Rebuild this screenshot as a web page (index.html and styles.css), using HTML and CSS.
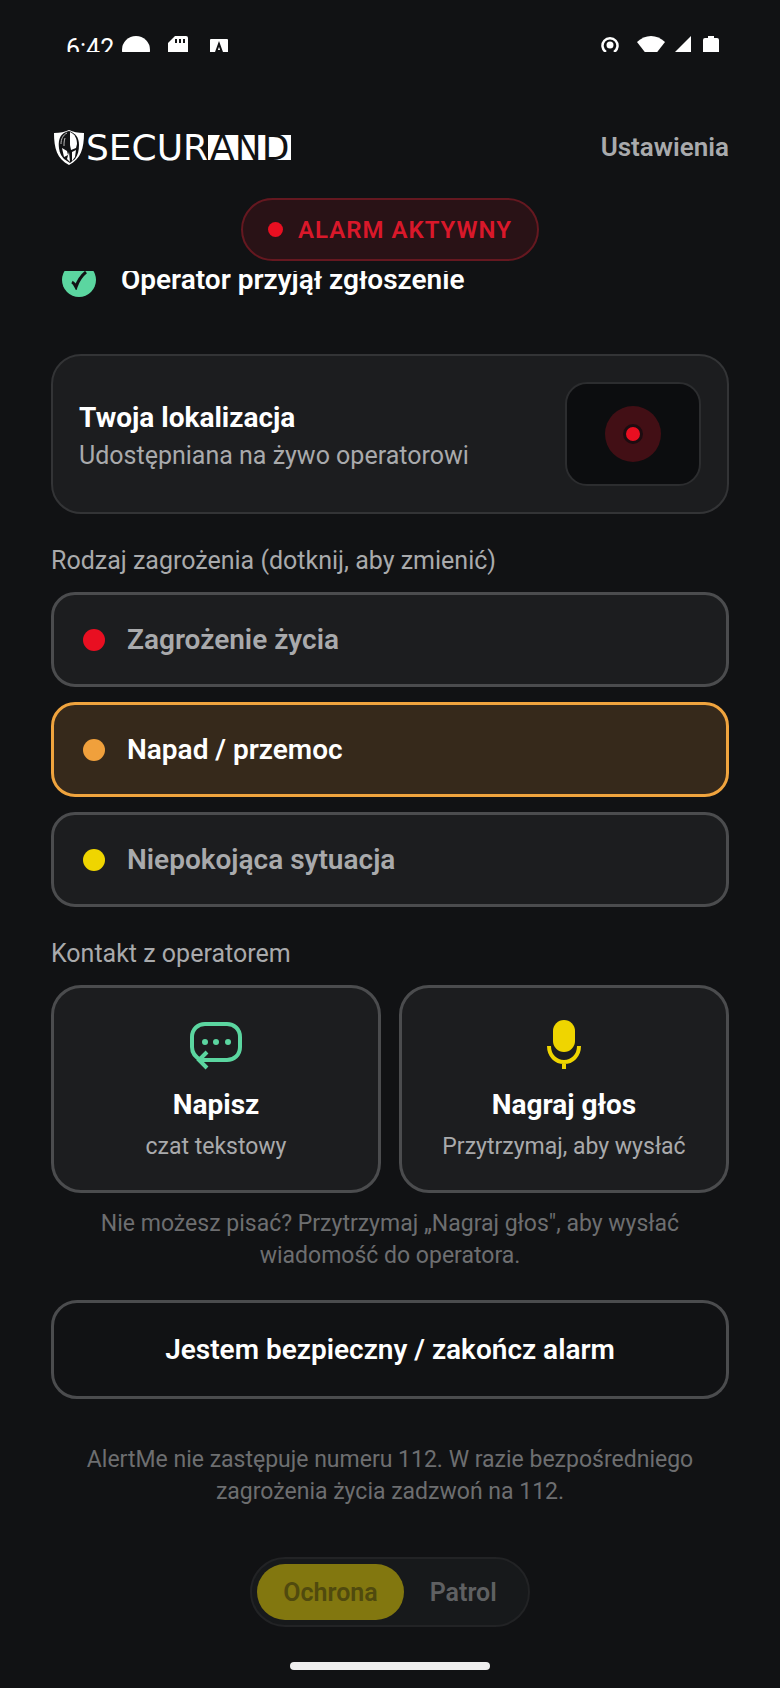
FILE: index.html
```
<!doctype html>
<html lang="pl">
<head>
    <meta charset="UTF-8">
    <meta name="viewport" content="width=device-width, initial-scale=1">
    <title>AlertMe</title>
    <link rel="stylesheet" href="styles.css">
</head>
<body>
    <div class="status-bar">
      <span class="time">6:42</span>
      <svg class="status-cloud" width="28" height="28" viewBox="0 0 28 28"><circle cx="14" cy="14" r="14" fill="#fff"/></svg>
      <svg class="status-sd" width="20" height="24" viewBox="0 0 20 24"><path d="M7 0h11a2 2 0 0 1 2 2v20a2 2 0 0 1-2 2H2a2 2 0 0 1-2-2V7z" fill="#fff"/><path d="M8 3v4M12 3v4M16 3v4" stroke="#111214" stroke-width="2"/></svg>
      <svg class="status-app" width="18" height="20" viewBox="0 0 18 20"><rect width="18" height="20" rx="1" fill="#fff"/><path d="M5 16l4-11 4 11M6 12h6" fill="none" stroke="#111214" stroke-width="2"/></svg>
      <div class="status-right">
        <svg width="18" height="22" viewBox="0 0 18 22"><path d="M5 16a7.500 7.500 0 1 1 8 0" fill="none" stroke="#fff" stroke-width="2.500"/><circle cx="9" cy="9" r="3.500" fill="#fff"/></svg>
        <svg width="28" height="24" viewBox="0 0 28 24"><path d="M0 6C8-2 20-2 28 6L14 24z" fill="#fff"/></svg>
        <svg width="17" height="17" viewBox="0 0 17 17"><path d="M17 0v17H0z" fill="#fff"/></svg>
        <svg width="16" height="26" viewBox="0 0 16 26"><path d="M5 0h6v2h3a2 2 0 0 1 2 2v22H0V4a2 2 0 0 1 2-2h3z" fill="#fff"/></svg>
      </div>
    </div>

    <header class="header">
      <div class="logo">
        <svg width="30" height="35" viewBox="0 0 30 35">
          <path d="M15 0c4 2 9 3 15 3 0 15-3 26-15 32C3 29 0 18 0 3c6 0 11-1 15-3z" fill="#fff"/>
          <path d="M15 1c6 2 10 6 10 14 0 5-1 10-4 14l-5 4-6-4C6 25 4 18 5 11 6 5 10 2 15 1z" fill="#111214"/>
          <path d="M16 2c5 2 7 7 7 12l-1 4-5 2-1-5z" fill="#fff"/>
          <path d="M13 3C9 5 7 9 7 14M11 8c-1 3-1 5-1 8" fill="none" stroke="#bbb" stroke-width="1"/>
          <path d="M8 18l5 3 1 4-4 2zM22 20l-4 2v9l3-4zM15 22l1 10-3-3z" fill="#fff"/>
        </svg>
        <span class="logo-text">SECUR</span><span class="logo-box">AND</span>
      </div>
      <a class="settings" href="#">Ustawienia</a>
    </header>

    <div class="alarm"><span class="alarm-dot"></span>ALARM AKTYWNY</div>

    <main class="content">
      <div class="step">
        <span class="step-icon">
          <svg width="18" height="20" viewBox="0 0 18 20"><path d="M2 12c2 1 3 3 4 5C8 11 11 6 16 2" fill="none" stroke="#111214" stroke-width="3"/></svg>
        </span>
        Operator przyjął zgłoszenie
      </div>

      <section class="location">
        <div class="location-text">
          <div class="title">Twoja lokalizacja</div>
          <div class="location-sub">Udostępniana na żywo operatorowi</div>
        </div>
        <div class="map"><span class="halo"><span class="pin"></span></span></div>
      </section>

      <fieldset class="threats">
        <legend class="label">Rodzaj zagrożenia (dotknij, aby zmienić)</legend>
        <label class="threat"><input class="dot red" type="radio" name="threat">Zagrożenie życia</label>
        <label class="threat selected"><input class="dot orange" type="radio" name="threat" checked>Napad / przemoc</label>
        <label class="threat"><input class="dot yellow" type="radio" name="threat">Niepokojąca sytuacja</label>
      </fieldset>

      <div class="label">Kontakt z operatorem</div>
      <div class="contact">
        <button class="contact-btn" type="button">
          <svg width="52" height="52" viewBox="0 0 52 52" fill="none" stroke="#5bd6a0" stroke-width="4">
            <path d="M11 40C5 37 2 32 2 27v-10C2 9 8 4 15 4h22c7 0 13 5 13 13v10c0 8-6 13-13 13H9"/>
            <path d="M17 32l-8 8 8 8"/>
            <g fill="#5bd6a0" stroke="none"><circle cx="15" cy="22" r="3"/><circle cx="26" cy="22" r="3"/><circle cx="38" cy="22" r="3"/></g>
          </svg>
          <span class="title">Napisz</span>
          <span class="contact-sub">czat tekstowy</span>
        </button>
        <button class="contact-btn" type="button">
          <svg width="52" height="52" viewBox="0 0 52 52">
            <rect x="15" y="0" width="22" height="32" rx="11" fill="#efd500"/>
            <path d="M11 26c0 10 7 16 15 16s15-6 15-16M26 42v7" fill="none" stroke="#efd500" stroke-width="4"/>
          </svg>
          <span class="title">Nagraj głos</span>
          <span class="contact-sub">Przytrzymaj, aby wysłać</span>
        </button>
      </div>
      <p class="note">Nie możesz pisać? Przytrzymaj „Nagraj głos", aby wysłać wiadomość do operatora.</p>

      <button class="finish" type="button">Jestem bezpieczny / zakończ alarm</button>
      <p class="note">AlertMe nie zastępuje numeru 112. W razie bezpośredniego zagrożenia życia zadzwoń na 112.</p>
    </main>

    <nav class="modes">
      <button class="mode active" type="button" disabled>Ochrona</button>
      <button class="mode" type="button" disabled>Patrol</button>
    </nav>
    <div class="home-bar"></div>
</body>
</html>
```

FILE: styles.css
```
* {
  box-sizing: border-box;
}
body {
  display: flex;
  flex-direction: column;
  min-height: 100vh;
  margin: 0;
  padding: 0 51px;
  background-color: #111214;
  color: #fff;
  font-family: Roboto, sans-serif;
  font-size: 26px;
  line-height: 32px;
}
button {
  font-family: inherit;
  color: inherit;
  cursor: pointer;
}
svg {
  display: block;
  flex-shrink: 0;
}

/* status bar, icons are cut at the bottom */
.status-bar {
  display: flex;
  align-items: flex-start;
  height: 52px;
  padding: 36px 10px 0 15px;
  overflow: hidden;
}
.time {
  margin-right: 8px;
  font-size: 25px;
  line-height: 26px;
}
.status-sd {
  margin-left: 18px;
}
.status-app {
  margin: 3px 0 0 22px;
}
.status-right {
  display: flex;
  margin-left: auto;
}
.status-right svg:nth-child(2) {
  margin: 0 9px 0 18px;
}
.status-right svg:nth-child(4) {
  margin-left: 12px;
}

.header {
  display: flex;
  justify-content: space-between;
  align-items: center;
  height: 114px;
  padding-top: 76px;
  margin-bottom: 32px;
}
.logo {
  display: flex;
  align-items: center;
  padding-left: 3px;
  font-family: "DejaVu Sans", sans-serif;
  font-size: 36px;
  line-height: 25px;
}
.logo-text {
  margin-left: 2px;
}
.logo-box {
  padding: 0 2px;
  background-color: #fff;
  color: #111214;
}
.settings {
  color: #a9aaac;
  font-weight: 600;
  text-decoration: none;
}

.alarm {
  display: flex;
  align-items: center;
  align-self: center;
  gap: 15px;
  height: 63px;
  padding: 0 25px;
  border: 2px solid #651820;
  border-radius: 32px;
  background-color: #291216;
  color: #d9182a;
  font-size: 24px;
  font-weight: 600;
  letter-spacing: 1px;
}
.alarm-dot {
  width: 15px;
  height: 15px;
  border-radius: 50%;
  background-color: #e90f21;
}

.content {
  flex: 1;
  margin-top: 10px;
  overflow: hidden;
}
.step {
  display: flex;
  align-items: center;
  gap: 25px;
  height: 38px;
  margin: -10px 0 55px 11px;
  font-size: 28px;
  font-weight: 600;
}
.step-icon {
  display: flex;
  align-items: center;
  justify-content: center;
  width: 34px;
  height: 34px;
  border-radius: 50%;
  background-color: #5bd6a0;
}

.location {
  display: flex;
  align-items: center;
  justify-content: space-between;
  padding: 26px;
  border: 2px solid #333436;
  border-radius: 30px;
  background-color: #1c1d1f;
}
.location-text {
  padding-top: 6px;
}
.title {
  font-size: 28px;
  font-weight: 700;
}
.location-sub {
  margin-top: 6px;
  color: #a9aaac;
  font-size: 25px;
}
.map {
  display: flex;
  align-items: center;
  justify-content: center;
  width: 136px;
  height: 104px;
  border: 2px solid #2c2d2f;
  border-radius: 22px;
  background-color: #0c0d0f;
}
.halo {
  display: flex;
  align-items: center;
  justify-content: center;
  width: 56px;
  height: 56px;
  border-radius: 50%;
  background-color: #420f15;
}
.pin {
  width: 20px;
  height: 20px;
  border: 3px solid #1d0c10;
  border-radius: 50%;
  background-color: #e90f21;
}

.label {
  padding: 0;
  color: #a9aaac;
  font-size: 25px;
}
.threats {
  display: flex;
  flex-direction: column;
  gap: 15px;
  min-width: 0;
  margin: 31px 0;
  padding: 0;
  border: 0;
}
.threats .label {
  margin-bottom: 15px;
}
.threat {
  display: flex;
  align-items: center;
  gap: 22px;
  height: 95px;
  padding: 0 29px;
  border: 3px solid #4b4c4e;
  border-radius: 24px;
  background-color: #1c1d1f;
  color: #a9aaac;
  font-size: 28px;
  font-weight: 600;
}
.threat.selected {
  border-color: #f0a43e;
  background-color: #36291b;
  color: #fff;
}
.dot {
  appearance: none;
  width: 22px;
  height: 22px;
  margin: 0;
  border-radius: 50%;
}
.red {
  background-color: #e90f21;
}
.orange {
  background-color: #f0a03c;
}
.yellow {
  background-color: #efd500;
}

.contact {
  display: grid;
  grid-template-columns: 1fr 1fr;
  gap: 18px;
  margin: 15px 0;
}
.contact-btn {
  display: flex;
  flex-direction: column;
  align-items: center;
  height: 208px;
  padding: 32px 0 0;
  border: 3px solid #4b4c4e;
  border-radius: 30px;
  background-color: #1c1d1f;
}
.contact-btn .title {
  margin-top: 17px;
  line-height: 32px;
}
.contact-sub {
  margin-top: 10px;
  color: #a9aaac;
  font-size: 23px;
  line-height: 32px;
}
.note {
  margin: 0 32px;
  color: #6d6e70;
  font-size: 23px;
  line-height: 32px;
  text-align: center;
}
.finish {
  width: 100%;
  height: 99px;
  margin: 28px 0 45px;
  border: 3px solid #4b4c4e;
  border-radius: 26px;
  background-color: transparent;
  font-size: 28px;
  font-weight: 600;
}

.modes {
  display: flex;
  align-self: center;
  padding: 5px;
  border: 2px solid #222325;
  border-radius: 36px;
  background-color: #17191b;
}
.mode {
  height: 56px;
  padding: 0 26px;
  border: 0;
  border-radius: 28px;
  background-color: transparent;
  color: #5f6062;
  font-size: 25px;
  font-weight: 600;
}
.mode.active {
  background-color: #82770f;
  color: #504a0e;
}
.home-bar {
  align-self: center;
  width: 200px;
  height: 8px;
  margin: 35px 0 18px;
  border-radius: 4px;
  background-color: #eee;
}
```
